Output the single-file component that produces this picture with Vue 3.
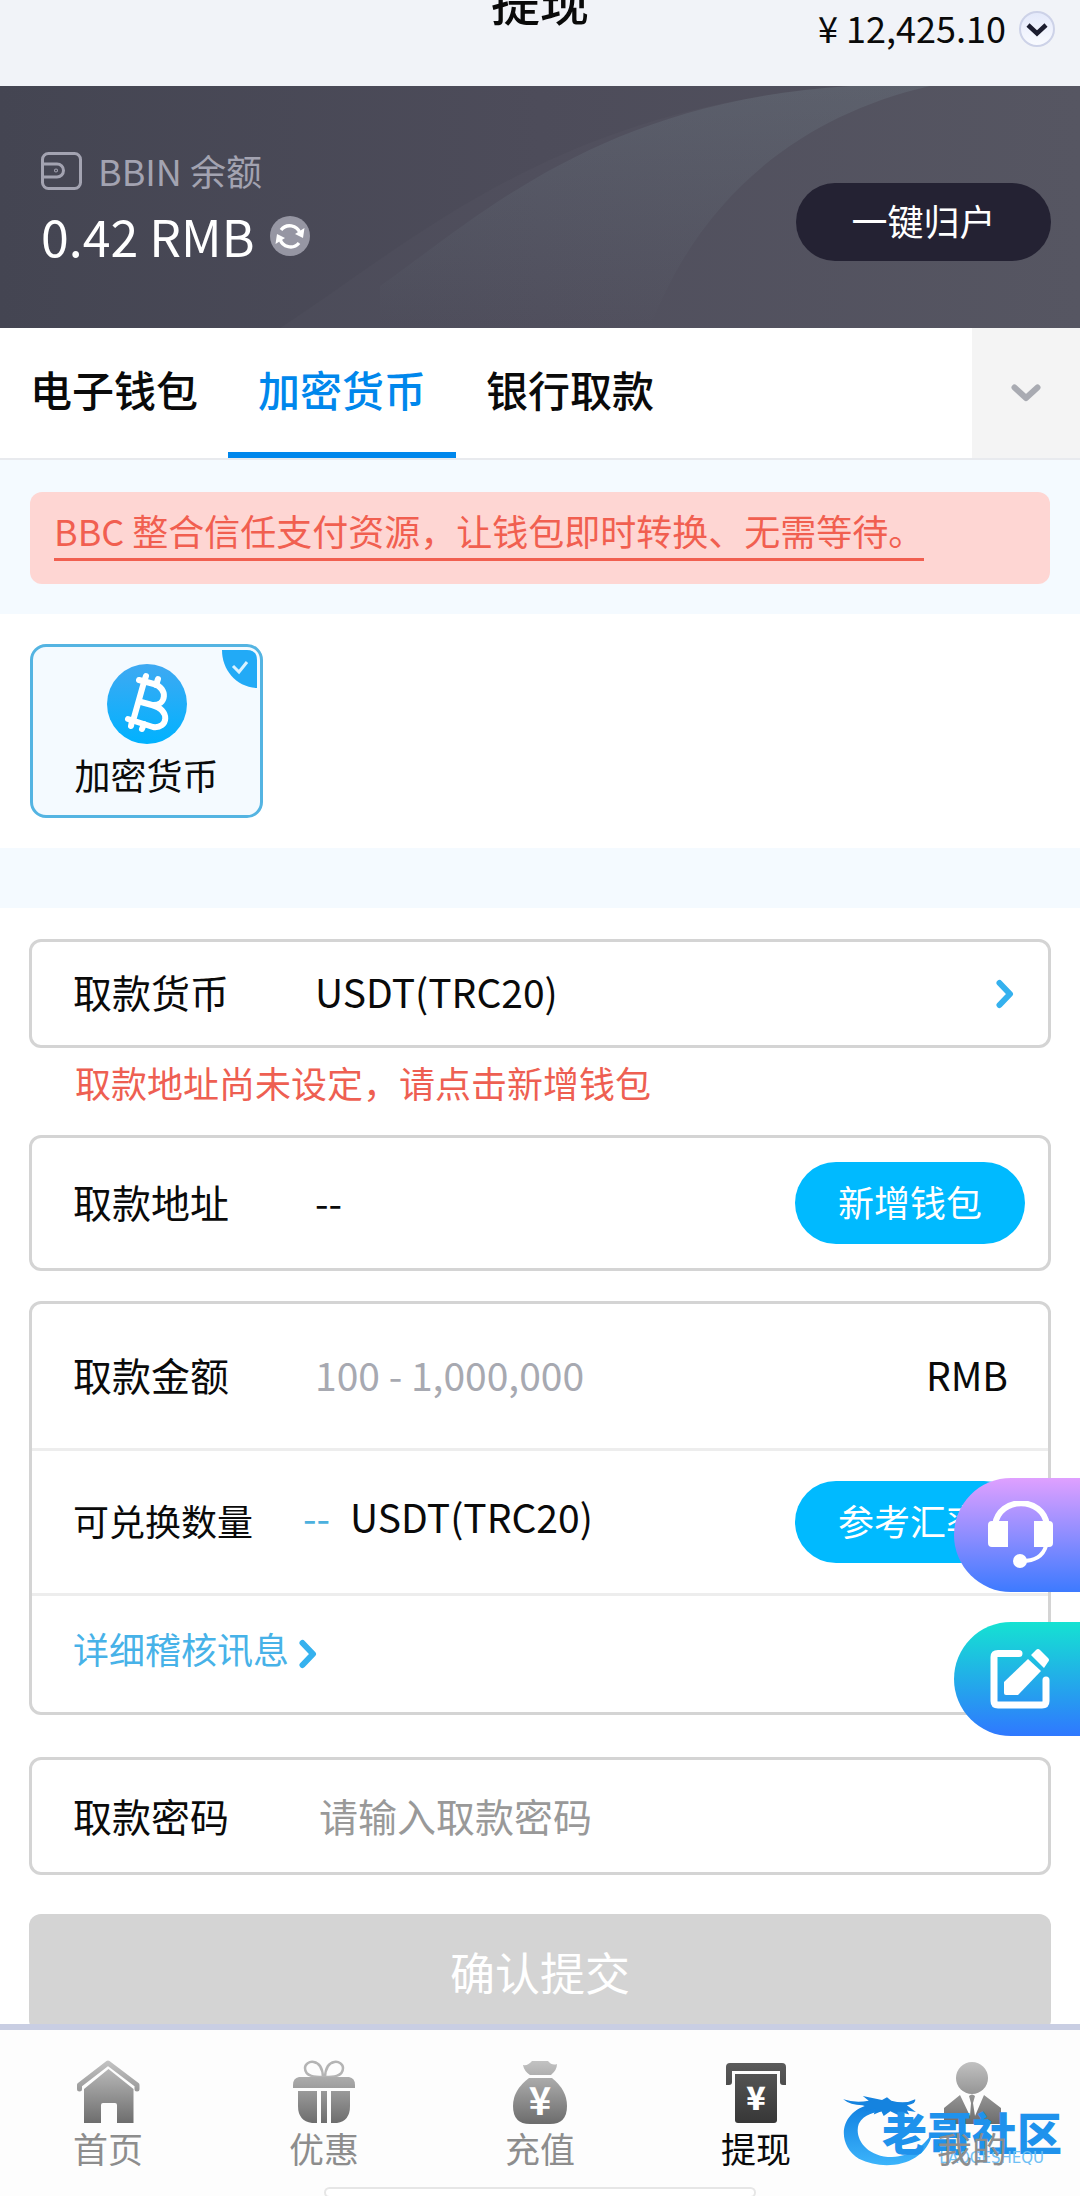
<template>
  <div class="wd-page">
    <header class="wd-header">
      <h1>提现</h1>
      <button class="wd-balance" type="button">
        <span>¥ {{ totalBalance }}</span>
        <svg width="38" height="38" viewBox="0 0 38 38">
          <defs>
            <linearGradient id="gBall" x1="0" y1="0" x2="0" y2="1">
              <stop offset="0" stop-color="#e4e9fb" />
              <stop offset="1" stop-color="#fafbff" />
            </linearGradient>
          </defs>
          <circle cx="19" cy="19" r="17" fill="url(#gBall)" stroke="#cdd2e8" stroke-width="2" />
          <path d="M10 15 L19 23.500 L28 15" fill="none" stroke="#1c1d30" stroke-width="4.500" />
        </svg>
      </button>
    </header>

    <section class="wd-banner">
      <svg class="wd-banner-bg" viewBox="0 0 1080 242" preserveAspectRatio="none">
        <defs>
          <linearGradient id="gSweep" x1="0" y1="0" x2="0" y2="1">
            <stop offset="0" stop-color="#7f949c" stop-opacity="0.200" />
            <stop offset="1" stop-color="#7f949c" stop-opacity="0" />
          </linearGradient>
        </defs>
        <path d="M280 242 C420 150 560 20 850 0 H1080 V242 Z" fill="#fff" opacity="0.020" />
        <path d="M380 200 C480 130 600 15 850 0 H930 C800 30 700 110 650 242 H380 Z" fill="url(#gSweep)" />
      </svg>
      <div class="wd-banner-info">
        <div class="wd-banner-name">
          <svg width="42" height="38" viewBox="0 0 42 38" fill="none" stroke="#a3a3b1" stroke-width="3">
            <rect x="1.500" y="1.500" width="38" height="35" rx="6" />
            <path d="M1 12 H16 A6 6 0 0 1 16 25 H1" />
            <circle cx="15" cy="18.500" r="0.500" />
          </svg>
          <span>BBIN 余额</span>
        </div>
        <div class="wd-banner-amount">
          <span>{{ bbinBalance }} RMB</span>
          <button class="wd-refresh" type="button" aria-label="刷新">
            <svg width="40" height="40" viewBox="0 0 40 40">
              <circle cx="20" cy="20" r="20" fill="#9696a3" />
              <g fill="none" stroke="#fff" stroke-width="3.400">
                <path d="M11 14 A11 11 0 0 1 30 17" />
                <path d="M29 27 A11 11 0 0 1 10 23" />
              </g>
              <path d="M25 18 L34.500 12 L33 22 Z M15 22 L5.500 28 L7 18 Z" fill="#fff" />
            </svg>
          </button>
        </div>
      </div>
      <button class="wd-collect" type="button">一键归户</button>
    </section>

    <nav class="wd-tabs">
      <button
        v-for="t in tabs"
        :key="t"
        type="button"
        class="wd-tab"
        :class="{ active: t === activeTab }"
        @click="activeTab = t"
      >{{ t }}</button>
      <button class="wd-tab-more" type="button" aria-label="更多">
        <svg width="30" height="18" viewBox="0 0 30 18">
          <path d="M3.500 3.500 L15 14 L26.500 3.500" fill="none" stroke="#a9abb2" stroke-width="6" stroke-linecap="round" stroke-linejoin="round" />
        </svg>
      </button>
    </nav>

    <div class="wd-notice-wrap">
      <div class="wd-notice"><a href="#">BBC 整合信任支付资源，让钱包即时转换、无需等待。</a></div>
    </div>

    <section class="wd-methods">
      <button class="wd-method" type="button">
        <svg width="80" height="80" viewBox="0 0 80 80">
          <defs>
            <linearGradient id="gCoin" x1="0" y1="0" x2="0" y2="1">
              <stop offset="0" stop-color="#3fa9f2" />
              <stop offset="1" stop-color="#00b2ff" />
            </linearGradient>
          </defs>
          <circle cx="40" cy="40" r="40" fill="url(#gCoin)" />
          <g fill="none" stroke="#fff" stroke-width="6" stroke-linecap="round" stroke-linejoin="round">
            <path d="M32 16 L47 20 C61 24 60 42 45 41 L34 38 M45 41 C64 46 61 65 46 63 L21 55" />
            <path d="M37 18 L26 57" />
            <path d="M39 12 L37 18 M51 15 L49 21 M25 57 L24 62 M37 60 L35 65" />
          </g>
        </svg>
        <span>{{ tabs[1] }}</span>
        <svg class="wd-check" width="35" height="38" viewBox="0 0 35 38">
          <path d="M0 0 H25 Q35 0 35 10 V38 C14 37 0 20 0 0 Z" fill="#22aaf6" />
          <path d="M11 16 L17 22 L25 12" fill="none" stroke="#d9f2ff" stroke-width="3" />
        </svg>
      </button>
    </section>

    <div class="wd-gap"></div>

    <form class="wd-form" @submit.prevent>
      <button class="wd-box wd-row wd-currency" type="button">
        <span class="wd-label">取款货币</span>
        <span class="wd-value">{{ currency }}</span>
        <svg class="wd-arrow" width="18" height="30" viewBox="0 0 18 30">
          <path d="M3.500 4 L14 15 L3.500 26" />
        </svg>
      </button>
      <p class="wd-error">取款地址尚未设定，请点击新增钱包</p>

      <div class="wd-box wd-row wd-address">
        <span class="wd-label">取款地址</span>
        <span class="wd-value">--</span>
        <button class="wd-pill" type="button">新增钱包</button>
      </div>

      <div class="wd-box wd-group">
        <div class="wd-row wd-amount">
          <label class="wd-label" for="amount">取款金额</label>
          <input id="amount" v-model="amount" class="wd-value" placeholder="100 - 1,000,000" />
          <span class="wd-unit">RMB</span>
        </div>
        <div class="wd-row wd-exchange">
          <span class="wd-label wd-small">可兑换数量</span>
          <span class="wd-value"><i>--</i>{{ currency }}</span>
          <button class="wd-pill" type="button">参考汇率</button>
        </div>
        <div class="wd-row wd-detail">
          <a href="#">详细稽核讯息</a>
          <svg class="wd-arrow" width="18" height="30" viewBox="0 0 18 30">
            <path d="M3.500 4 L14 15 L3.500 26" />
          </svg>
        </div>
      </div>

      <div class="wd-box wd-row wd-password">
        <label class="wd-label" for="pwd">取款密码</label>
        <input id="pwd" v-model="password" class="wd-value" type="password" placeholder="请输入取款密码" />
      </div>

      <button class="wd-submit" type="submit">确认提交</button>
    </form>

    <!-- 悬浮按钮 -->
    <div class="wd-floats">
      <button class="wd-float wd-service" type="button" aria-label="客服">
        <svg width="66" height="68" viewBox="0 0 66 68">
          <path d="M7 24 C11 -5 55 -5 59 24" fill="none" stroke="#fff" stroke-width="6" />
          <path d="M4 20 H20 V46 H4 Q0 46 0 42 V24 Q0 20 4 20 Z M46 20 H61 Q65 20 65 24 V42 Q65 46 61 46 H46 Z" fill="#fff" />
          <path d="M58 45 C55 55 47 60 34 60" fill="none" stroke="#fff" stroke-width="4" />
          <circle cx="32" cy="60" r="7" fill="#fff" />
        </svg>
      </button>
      <button class="wd-float wd-feedback" type="button" aria-label="反馈">
        <svg width="64" height="64" viewBox="-2 -2 64 64">
          <path d="M29 4.500 H8 Q4 4.500 4 8 V52 Q4 56 8 56 H52 Q56 56 56 52 V31" fill="none" stroke="#fff" stroke-width="7" stroke-linecap="round" />
          <path d="M38 10 L51 22 L28 46 H16 Q14 46 14 44 V33 Z" fill="#fff" />
          <path d="M41 6 L46 1 Q48 -1 50 1 L58 9 Q60 11 58 13 L54 19 Z" fill="#fff" />
        </svg>
      </button>
    </div>

    <footer class="wd-nav">
      <svg width="0" height="0" class="wd-defs">
        <defs>
          <linearGradient id="gGrey" gradientUnits="userSpaceOnUse" x1="0" y1="0" x2="0" y2="64">
            <stop offset="0" stop-color="#c4c4c4" />
            <stop offset="1" stop-color="#6c6c6c" />
          </linearGradient>
          <linearGradient id="gDark" gradientUnits="userSpaceOnUse" x1="0" y1="0" x2="0" y2="64">
            <stop offset="0" stop-color="#5c5c5c" />
            <stop offset="1" stop-color="#363636" />
          </linearGradient>
          <linearGradient id="gMark" x1="0" y1="0" x2="0" y2="1">
            <stop offset="0" stop-color="#117fe0" />
            <stop offset="1" stop-color="#3cb4fb" />
          </linearGradient>
        </defs>
      </svg>
      <a v-for="n in navs" :key="n.key" href="#" :class="{ active: n.key === 'withdraw' }">
        <svg width="64" height="64" viewBox="0 0 64 64">
          <g v-if="n.key === 'home'" fill="url(#gGrey)">
            <path d="M3.500 29 V25 L32 3 L61 25 V29" fill="none" stroke="url(#gGrey)" stroke-width="5" stroke-linecap="round" stroke-linejoin="round" />
            <path d="M32.500 9 L57.500 29 V63 H41 V45 Q41 43 39 43 H27 Q25 43 25 45 V63 H8 V29 Z" />
          </g>
          <g v-else-if="n.key === 'promo'" fill="url(#gGrey)">
            <path d="M31 17 C24 17 13 17 13 8 C13 0 30 -3 31 17 Z M33 17 C40 17 51 17 51 8 C51 0 34 -3 33 17 Z" fill="none" stroke="#b4b4b4" stroke-width="2.500" />
            <path d="M7 17 H57 Q63 18 63 25 V28 H1 V25 Q1 18 7 17 Z" />
            <path d="M6 31 H25 V63 H20 Q6 61 6 46 Z M29 31 H35 V63 H29 Z M39 31 H58 V46 Q58 61 45 63 H39 Z" />
          </g>
          <g v-else-if="n.key === 'deposit'" fill="url(#gGrey)">
            <path d="M15 5 Q20 6 24 1 H40 Q44 6 49 4 Q49 10 43 15 H22 Q16 11 15 5 Z" />
            <path d="M21 18 H44 Q59 30 59 46 Q59 64 42 64 H22 Q5 64 5 46 Q5 30 21 18 Z" />
            <text x="32" y="55" fill="#fff" font-size="38" font-weight="700" text-anchor="middle">¥</text>
          </g>
          <g v-else-if="n.key === 'withdraw'" fill="url(#gDark)">
            <path d="M6 3 H58 Q62 3 62 7 V25 H59 Q56 25 56 22 V11 H8 V22 Q8 25 5 25 H2 V7 Q2 3 6 3 Z" />
            <path d="M11 14 H53 V60 Q53 63 50 63 H14 Q11 63 11 60 Z" />
            <text x="32" y="50" fill="#fff" font-size="32" font-weight="900" text-anchor="middle">¥</text>
          </g>
          <g v-else fill="url(#gGrey)">
            <circle cx="32" cy="18" r="16" />
            <path d="M20 35 L30 56 L31 43 L29 36 Q32 33 35 36 L33 43 L35 56 L44 35 L61 48 V64 H4 V48 Z" />
          </g>
        </svg>
        <span>{{ n.label }}</span>
      </a>
      <div class="wd-mark">
        <svg width="92" height="73" viewBox="710 350 276 220">
          <path d="M800 380 C700 400 690 500 760 545 C840 585 960 565 982 468 C950 510 920 535 860 540 C780 540 745 480 760 440 C775 410 810 405 830 402 Z" fill="url(#gMark)" />
          <path d="M713 366 Q750 378 790 370 L772 356 L830 368 L845 360 L858 370 Q900 382 930 366 Q934 380 905 384 L932 404 L905 400 L912 412 L885 404 L880 414 L855 402 L835 416 L828 402 L805 412 L812 394 L780 402 Q790 388 770 384 Q735 384 713 366 Z" fill="#1583df" />
        </svg>
        <div class="wd-mark-text">
          <strong>老哥社区</strong>
          <small>LAOGESHEQU</small>
        </div>
      </div>
      <div class="wd-home-bar"></div>
    </footer>
  </div>
</template>

<script setup>
import { ref } from 'vue'

const totalBalance = ref('12,425.10')
const bbinBalance = ref('0.42')
const tabs = ['电子钱包', '加密货币', '银行取款']
const activeTab = ref('加密货币')
const currency = ref('USDT(TRC20)')
const amount = ref('')
const password = ref('')

const navs = [
  { key: 'home', label: '首页' },
  { key: 'promo', label: '优惠' },
  { key: 'deposit', label: '充值' },
  { key: 'withdraw', label: '提现' },
  { key: 'mine', label: '我的' }
]
</script>

<style>
body { background: #fff; }
</style>

<style scoped>
.wd-page {
  min-height: 100vh;
  box-sizing: border-box;
  padding-bottom: 165px;
  overflow: hidden;
  background: #fff;
  color: #0a0a0a;
  font-family: 'Noto Sans CJK SC', sans-serif;
  font-size: 36px;
}

button, input { font: inherit; color: inherit; margin: 0; padding: 0; border: none; background: none; outline: none; }
button { cursor: pointer; }
a { color: inherit; text-decoration: none; }
svg { display: block; flex-shrink: 0; }

.wd-header {
  display: grid;
  grid-template-columns: 1fr auto 1fr;
  height: 86px;
  padding: 0 24px;
  overflow: hidden;
  background: #f1f3f8;
}
.wd-header h1 { grid-column: 2; margin: -28px 0 0; font-size: 49px; font-weight: 500; line-height: 56px; }
.wd-balance { display: flex; align-items: center; justify-self: end; gap: 12px; height: 58px; }
.wd-balance span { padding-bottom: 4px; }

.wd-banner {
  position: relative;
  display: flex;
  align-items: center;
  justify-content: space-between;
  height: 242px;
  padding: 0 29px 0 41px;
  background: linear-gradient(90deg, #444552, #4d4c5a 50%, #53535f);
}
.wd-banner-bg { position: absolute; inset: 0; width: 100%; height: 100%; }
.wd-banner-info { position: relative; padding-bottom: 4px; }
.wd-banner-name { display: flex; align-items: center; gap: 15px; line-height: 60px; color: #a3a3b1; }
.wd-banner-name span, .wd-banner-amount span { padding-bottom: 2px; }
.wd-banner-amount { display: flex; align-items: center; gap: 15px; font-size: 50px; line-height: 66px; color: #fff; }
.wd-refresh { border-radius: 50%; }
.wd-collect {
  position: relative; width: 255px; height: 78px; margin-top: 30px; padding-bottom: 5px;
  border-radius: 39px; background: #242233; color: #fff;
}

.wd-tabs { display: flex; height: 130px; border-bottom: 2px solid #e8eaee; background: #fff; }
.wd-tab { padding: 0 30px 4px; font-size: 42px; font-weight: 500; border-bottom: 6px solid transparent; }
.wd-tab.active { color: #0087ec; border-bottom-color: #0087ec; }
.wd-tab-more { display: flex; align-items: center; justify-content: center; width: 108px; margin-left: auto; background: #f4f4f4; }

.wd-notice-wrap { padding: 32px 30px 30px; background: #f4faff; }
.wd-notice { height: 92px; padding: 0 24px; border-radius: 12px; background: #fed6d3; color: #f15f50; }
.wd-notice a { display: inline-block; margin-top: 12px; padding-bottom: 2px; line-height: 52px; border-bottom: 3px solid #f15f50; }

.wd-methods { padding: 30px; background: #fff; }
.wd-method {
  position: relative;
  display: flex; flex-direction: column; align-items: center;
  width: 233px; height: 174px; box-sizing: border-box; padding-top: 17px;
  border: 3px solid #54b4e2; border-radius: 16px; background: #f4faff;
}
.wd-method span { margin-top: 4px; line-height: 52px; }
.wd-check { position: absolute; top: 3px; right: 3px; }
.wd-gap { height: 60px; background: #f4faff; }

.wd-form { padding: 31px 29px 0; }
.wd-row { display: flex; align-items: center; width: 100%; box-sizing: border-box; padding: 0 23px 0 41px; text-align: left; font-size: 39px; }
.wd-box { border: 3px solid #d4d4d4; border-radius: 12px; background: #fff; box-sizing: border-box; }
.wd-label { flex: 0 0 242px; padding-bottom: 5px; }
.wd-small { flex-basis: 230px; font-size: 36px; }
.wd-value { flex: 1; min-width: 0; padding-bottom: 5px; }
.wd-unit { padding-bottom: 5px; }
.wd-value::placeholder { color: #a7a9b1; opacity: 1; }
.wd-arrow path { fill: none; stroke: #35b1ee; stroke-width: 6; stroke-linecap: round; stroke-linejoin: round; }

.wd-currency { height: 109px; padding-right: 34px; }
.wd-error { margin: 0 0 19px 46px; line-height: 68px; color: #ee5f52; }
.wd-address { height: 136px; }
.wd-pill { width: 230px; height: 82px; padding-bottom: 4px; border-radius: 41px; background: #00baff; color: #fff; font-size: 36px; }

.wd-group { margin-top: 30px; }
.wd-amount { height: 147px; padding-right: 40px; border-bottom: 3px solid #ededed; }
.wd-exchange { height: 145px; border-bottom: 3px solid #ededed; }
.wd-exchange .wd-value { padding-bottom: 12px; }
.wd-exchange i { margin-right: 20px; color: #4cb0de; font-style: normal; }
.wd-detail { height: 116px; gap: 10px; font-size: 36px; color: #47b2e8; }
.wd-detail a { padding-bottom: 12px; }

.wd-password { height: 118px; margin-top: 42px; }
.wd-password .wd-label { flex-basis: 246px; padding-bottom: 2px; }
.wd-password .wd-value { padding-bottom: 2px; }
.wd-password .wd-value::placeholder { color: #999; }
.wd-submit { display: block; width: 100%; height: 118px; margin-top: 39px; padding-bottom: 4px; border-radius: 12px; background: #d4d4d4; color: #fff; font-size: 45px; }

.wd-floats { position: fixed; right: 0; bottom: 460px; display: flex; flex-direction: column; gap: 30px; }
.wd-float { display: flex; align-items: center; width: 126px; height: 114px; padding-left: 34px; border-radius: 57px 0 0 57px; }
.wd-service { background: linear-gradient(#dfa0ff, #3d7aff); }
.wd-feedback { background: linear-gradient(#15e2d2, #2f78ff); }

.wd-nav {
  position: fixed; left: 0; right: 0; bottom: 0;
  display: flex; height: 172px; box-sizing: border-box;
  border-top: 6px solid #c9cee3; background: #fdfdfd; color: #8d8d8d;
}
.wd-nav > a { flex: 1; display: flex; flex-direction: column; align-items: center; padding-top: 30px; }
.wd-nav > a span { position: relative; z-index: 1; font-size: 35px; line-height: 48px; }
.wd-nav > a.active { color: #0a0a0a; }
.wd-defs { position: absolute; }
.wd-mark { position: absolute; right: 18px; top: 64px; display: flex; }
.wd-mark > svg { margin-right: -52px; }
.wd-mark-text { display: flex; flex-direction: column; align-items: flex-end; padding-top: 20px; color: #1f92ec; }
.wd-mark strong { font-size: 45px; font-weight: 900; line-height: 36px; }
.wd-mark small { padding-right: 18px; font-family: 'DejaVu Sans', sans-serif; font-size: 15px; line-height: 16px; color: #6fc0f5; }
.wd-home-bar {
  position: absolute; left: 30%; right: 30%; bottom: -2px; height: 11px; box-sizing: border-box;
  border: 2px solid #e6e6e6; border-radius: 6px; background: #fff;
}
</style>
